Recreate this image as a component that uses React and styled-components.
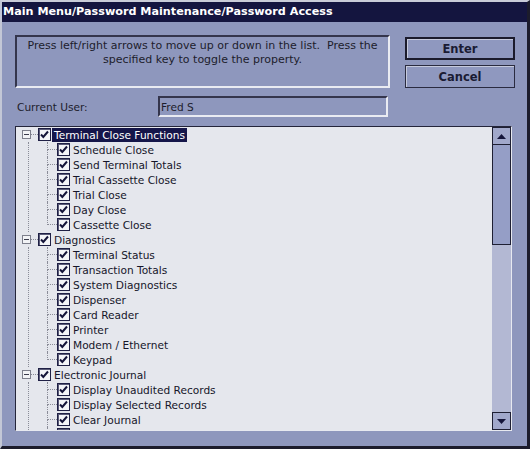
import React from "react";
import styled, { createGlobalStyle } from "styled-components";

const tree = [
  {
    label: "Terminal Close Functions",
    selected: true,
    children: [
      "Schedule Close",
      "Send Terminal Totals",
      "Trial Cassette Close",
      "Trial Close",
      "Day Close",
      "Cassette Close",
    ],
  },
  {
    label: "Diagnostics",
    children: [
      "Terminal Status",
      "Transaction Totals",
      "System Diagnostics",
      "Dispenser",
      "Card Reader",
      "Printer",
      "Modem / Ethernet",
      "Keypad",
    ],
  },
  {
    label: "Electronic Journal",
    children: [
      "Display Unaudited Records",
      "Display Selected Records",
      "Clear Journal",
      "Archive/Delete Journal",
    ],
  },
];

function Check() {
  return (
    <CheckBox>
      <svg width="11" height="11" viewBox="0 0 11 11">
        <path d="M2 5.5l2.3 2.4L9 2.5" fill="none" stroke="#15153a" strokeWidth="2" />
      </svg>
    </CheckBox>
  );
}

function Arrow({ down }) {
  return (
    <svg width="9" height="5" viewBox="0 0 9 5">
      <path d={down ? "M0 0h9L4.5 5z" : "M0 5h9L4.5 0z"} fill="#15153a" />
    </svg>
  );
}

export default function App() {
  return (
    <>
      <GlobalStyle />
      <Window>
        <TitleBar>Main Menu/Password Maintenance/Password Access</TitleBar>
        <Body>
          <TopRow>
            <HelpBox>
              Press left/right arrows to move up or down in the list.&nbsp; Press the
              <br />
              specified key to toggle the property.
            </HelpBox>
            <ButtonColumn>
              <Button $default>Enter</Button>
              <Button>Cancel</Button>
            </ButtonColumn>
          </TopRow>
          <UserRow>
            <UserLabel>Current User:</UserLabel>
            <UserField>Fred S</UserField>
          </UserRow>
          <TreePanel>
            <TreeList>
              {tree.map((group) => (
                <div key={group.label}>
                  <ParentRow>
                    <Expander />
                    <Stub />
                    <Check />
                    <NodeLabel $selected={group.selected}>{group.label}</NodeLabel>
                  </ParentRow>
                  <ChildList>
                    {group.children.map((child, i) => (
                      <ChildRow key={child}>
                        <Connector>
                          <ConnTop />
                          <ConnBottom $last={i === group.children.length - 1} />
                        </Connector>
                        <Check />
                        <NodeLabel>{child}</NodeLabel>
                      </ChildRow>
                    ))}
                  </ChildList>
                </div>
              ))}
            </TreeList>
            <ScrollBar>
              <ScrollButton>
                <Arrow />
              </ScrollButton>
              <Thumb />
              <Track />
              <ScrollButton>
                <Arrow down />
              </ScrollButton>
            </ScrollBar>
          </TreePanel>
        </Body>
      </Window>
    </>
  );
}

const GlobalStyle = createGlobalStyle`
  body {
    margin: 0;
    background: #8e97bd;
    font-family: "DejaVu Sans", sans-serif;
  }
`;

const Window = styled.div`
  width: 530px;
  height: 449px;
  box-sizing: border-box;
  border-top: 2px solid #c9ccd8;
  border-left: 2px solid #c3c7d6;
  border-right: 3px solid #1c1c2c;
  border-bottom: 3px solid #1c1c2c;
  background: #8e97bd;
  display: flex;
  flex-direction: column;
`;

const TitleBar = styled.div`
  height: 20px;
  background: #14153f;
  color: #ffffff;
  font-weight: bold;
  font-size: 11.2px;
  line-height: 20px;
  padding-left: 1px;
  white-space: nowrap;
`;

const Body = styled.div`
  flex: 1;
  display: flex;
  flex-direction: column;
  padding: 13px 12px 15px 13px;
`;

const TopRow = styled.div`
  display: flex;
  gap: 15px;
  height: 53px;
`;

const HelpBox = styled.div`
  width: 375px;
  box-sizing: border-box;
  border-top: 2px solid #34354c;
  border-left: 2px solid #34354c;
  border-right: 2px solid #e9ebf2;
  border-bottom: 2px solid #e9ebf2;
  text-align: center;
  font-size: 11px;
  line-height: 14px;
  color: #1d1d2c;
  padding-top: 2px;
  white-space: nowrap;
`;

const ButtonColumn = styled.div`
  width: 110px;
  display: flex;
  flex-direction: column;
  gap: 5px;
  padding-top: 2px;
`;

const Button = styled.div`
  height: 23px;
  box-sizing: border-box;
  border: ${(p) => (p.$default ? "2px solid #1b1b2c" : "1px solid #2a2b40")};
  box-shadow: inset 1px 1px 0 #c6cadc;
  background: #8f98bf;
  color: #1a1b33;
  font-weight: bold;
  font-size: 11.5px;
  display: flex;
  align-items: center;
  justify-content: center;
`;

const UserRow = styled.div`
  margin-top: 8px;
  height: 21px;
  display: flex;
  align-items: center;
`;

const UserLabel = styled.div`
  width: 141px;
  padding-left: 2px;
  font-size: 10.6px;
  color: #1d1d2c;
`;

const UserField = styled.div`
  width: 230px;
  height: 21px;
  box-sizing: border-box;
  border-top: 2px solid #34354c;
  border-left: 2px solid #34354c;
  border-right: 2px solid #e9ebf2;
  border-bottom: 2px solid #e9ebf2;
  font-size: 10.6px;
  color: #1d1d2c;
  padding-left: 1px;
  display: flex;
  align-items: center;
`;

const TreePanel = styled.div`
  margin-top: 9px;
  margin-right: 3px;
  height: 305px;
  box-sizing: border-box;
  border-top: 1px solid #24253a;
  border-left: 1px solid #24253a;
  border-right: 1px solid #e7e9f0;
  border-bottom: 1px solid #e7e9f0;
  background: #e5e7ed;
  display: flex;
`;

const TreeList = styled.div`
  flex: 1;
  overflow: hidden;
  font-size: 10.6px;
  color: #15162a;
`;

const ParentRow = styled.div`
  height: 15px;
  display: flex;
  align-items: center;
  padding-left: 6px;
`;

const Expander = styled.div`
  width: 9px;
  height: 9px;
  box-sizing: border-box;
  border: 1px solid #7d7f8c;
  background: #f2f3f6 linear-gradient(#3a3b4c, #3a3b4c) no-repeat center / 5px 1px;
`;

const Stub = styled.div`
  width: 7px;
  border-top: 1px dotted #8a8c98;
`;

const CheckBox = styled.div`
  width: 13px;
  height: 13px;
  box-sizing: border-box;
  border: 1px solid #1f2045;
  box-shadow: inset 1px 1px 0 #5a5b78;
  background: #f4f5f8;
  display: flex;
  align-items: center;
  justify-content: center;
  flex-shrink: 0;
`;

const NodeLabel = styled.span`
  margin-left: 1px;
  padding: 0 2px;
  height: 14px;
  line-height: 14px;
  white-space: nowrap;
  background: ${(p) => (p.$selected ? "#15164a" : "transparent")};
  color: ${(p) => (p.$selected ? "#ffffff" : "inherit")};
`;

const ChildList = styled.div`
  margin-left: 12px;
  padding-left: 18px;
  border-left: 1px dotted #8a8c98;
`;

const ChildRow = styled.div`
  height: 15px;
  display: flex;
  align-items: center;
`;

const Connector = styled.div`
  width: 10px;
  height: 15px;
  display: flex;
  flex-direction: column;
`;

const ConnTop = styled.div`
  height: 7px;
  border-left: 1px dotted #8a8c98;
  border-bottom: 1px dotted #8a8c98;
`;

const ConnBottom = styled.div`
  flex: 1;
  border-left: 1px dotted ${(p) => (p.$last ? "transparent" : "#8a8c98")};
`;

const ScrollBar = styled.div`
  width: 19px;
  display: flex;
  flex-direction: column;
  background: #b3b8d3;
`;

const ScrollButton = styled.div`
  height: 18px;
  box-sizing: border-box;
  border: 1px solid #1e1f33;
  background: #a1a8cb;
  display: flex;
  align-items: center;
  justify-content: center;
`;

const Thumb = styled.div`
  height: 100px;
  box-sizing: border-box;
  border: 1px solid #1e1f33;
  border-top: none;
  background: #959ec6;
`;

const Track = styled.div`
  flex: 1;
`;
